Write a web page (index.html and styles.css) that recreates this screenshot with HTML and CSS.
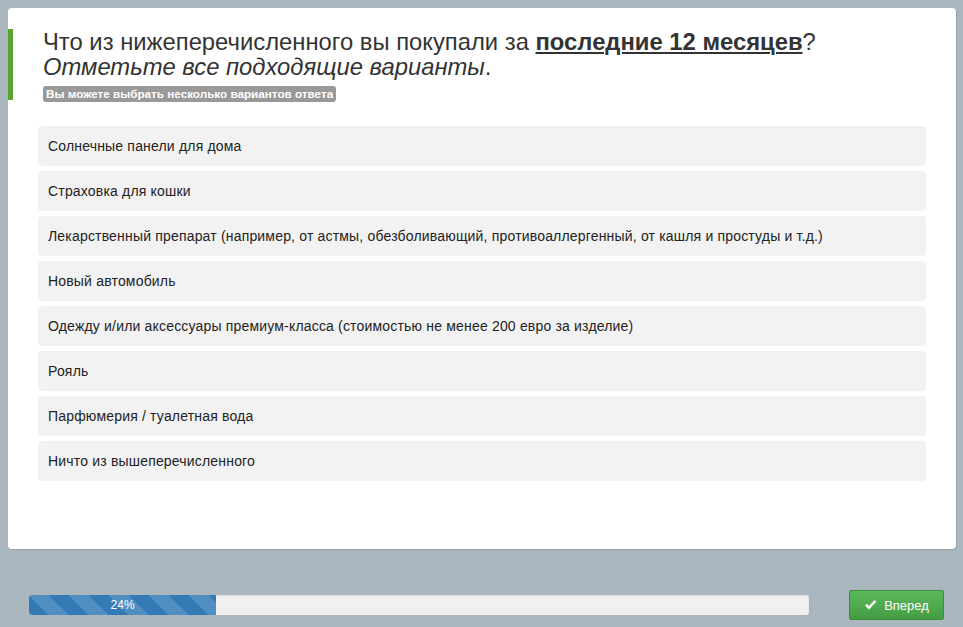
FILE: index.html
```html
<!DOCTYPE html>
<html lang="ru">

<head>
    <meta charset="UTF-8">
    <meta name="viewport" content="width=device-width, initial-scale=1.0">
    <title>Опрос</title>
    <link rel="stylesheet" href="styles.css">
</head>

<body>
    <div class="card">
        <div class="question">
            <h1 class="question-title">Что из нижеперечисленного вы покупали за <u><b>последние 12 месяцев</b></u>?<br>
                <i>Отметьте все подходящие варианты</i>.</h1>
            <span class="hint">Вы можете выбрать несколько вариантов ответа</span>
        </div>
        <ul class="answers">
            <li>Солнечные панели для дома</li>
            <li>Страховка для кошки</li>
            <li>Лекарственный препарат (например, от астмы, обезболивающий, противоаллергенный, от кашля и простуды и т.д.)</li>
            <li>Новый автомобиль</li>
            <li>Одежду и/или аксессуары премиум-класса (стоимостью не менее 200 евро за изделие)</li>
            <li>Рояль</li>
            <li>Парфюмерия / туалетная вода</li>
            <li>Ничто из вышеперечисленного</li>
        </ul>
    </div>

    <div class="footer">
        <div class="progress">
            <div class="progress-bar" style="width: 24%;">24%</div>
        </div>
        <button class="btn-next">
            <svg width="13" height="12" viewBox="0 0 13 12"><path d="M1 6.5 L2.8 4.8 L5 7 L10.6 1 L12.3 2.7 L5 10.4 Z" fill="#fff"/></svg>
            Вперед
        </button>
    </div>
</body>

</html>
```

FILE: styles.css
```css
* {
    margin: 0;
    padding: 0;
    box-sizing: border-box;
}

body {
    font-family: "Liberation Sans", Arial, sans-serif;
    background: #abb7bf;
    color: #222;
}

.card {
    margin: 8px 7px 0 8px;
    height: 541px;
    background: #fff;
    border-radius: 4px;
    box-shadow: 1px 1px 1px rgba(0, 0, 0, 0.12);
    padding-top: 21px;
}

.question {
    border-left: 5px solid #5aa52c;
    padding: 0 0 0 30px;
    height: 71px;
}

.question-title {
    font-size: 23.8px;
    font-weight: normal;
    line-height: 25px;
    color: #333;
}

.question-title b {
    font-weight: bold;
}

.question-title u {
    text-decoration-thickness: 2px;
    text-underline-offset: 2px;
}

.hint {
    display: inline-block;
    margin-top: 7px;
    background: #999;
    color: #fff;
    font-size: 11.7px;
    font-weight: bold;
    line-height: 16px;
    padding: 0 3px;
    border-radius: 3px;
}

.answers {
    list-style: none;
    margin: 26px 30px 0 30px;
    display: flex;
    flex-direction: column;
    gap: 5px;
}

.answers li {
    height: 40px;
    background: #f2f2f2;
    border-radius: 4px;
    padding: 0 10px;
    display: flex;
    align-items: center;
    font-size: 14px;
    letter-spacing: 0.18px;
    color: #222;
}

.footer {
    display: flex;
    align-items: center;
    margin-top: 41px;
    padding: 0 19px 0 29px;
}

.progress {
    width: 780px;
    height: 20px;
    background: #f0f0f0;
    border-radius: 3px;
    overflow: hidden;
    box-shadow: inset 0 1px 2px rgba(0, 0, 0, 0.08);
}

.progress-bar {
    height: 100%;
    background-color: #337ab7;
    background-image: linear-gradient(45deg, rgba(255, 255, 255, 0.15) 25%, transparent 25%, transparent 50%, rgba(255, 255, 255, 0.15) 50%, rgba(255, 255, 255, 0.15) 75%, transparent 75%, transparent);
    background-size: 40px 40px;
    color: #fff;
    font-size: 12px;
    line-height: 20px;
    text-align: center;
}

.btn-next {
    margin-left: auto;
    width: 95px;
    height: 30px;
    border: 1px solid #3d8b3d;
    border-radius: 2px;
    background: linear-gradient(#5cb85c, #449d44);
    color: #fff;
    font-family: "Liberation Sans", Arial, sans-serif;
    font-size: 13px;
    display: flex;
    align-items: center;
    justify-content: center;
    gap: 7px;
}
```
